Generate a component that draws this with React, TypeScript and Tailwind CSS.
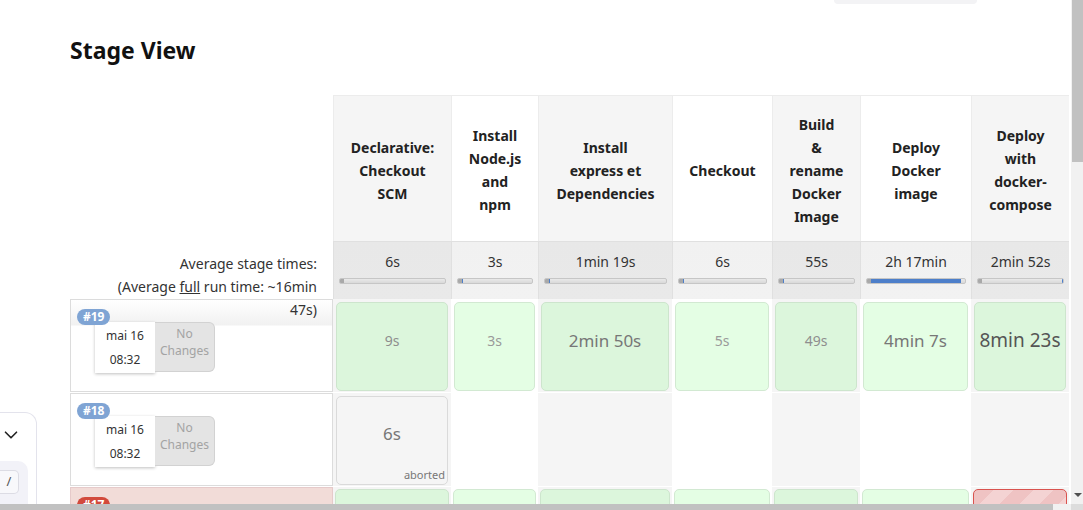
import { ChevronDown } from "lucide-react";

const GRID = "grid grid-cols-[263px_118px_87px_134px_100px_88px_111px_98px]";

type Stage = {
  lines: string[];
  avg: string;
  fill: number;
  tickRight?: boolean;
};

const stages: Stage[] = [
  { lines: ["Declarative:", "Checkout", "SCM"], avg: "6s", fill: 0 },
  { lines: ["Install", "Node.js", "and", "npm"], avg: "3s", fill: 1 },
  { lines: ["Install", "express et", "Dependencies"], avg: "1min 19s", fill: 1 },
  { lines: ["Checkout"], avg: "6s", fill: 1 },
  { lines: ["Build", "&", "rename", "Docker", "Image"], avg: "55s", fill: 1 },
  { lines: ["Deploy", "Docker", "image"], avg: "2h 17min", fill: 92 },
  { lines: ["Deploy", "with", "docker-", "compose"], avg: "2min 52s", fill: 0, tickRight: true },
];

const row19 = [
  { t: "9s", cls: "text-[14px] text-[#8e8e8e]" },
  { t: "3s", cls: "text-[14px] text-[#9a9a9a]" },
  { t: "2min 50s", cls: "text-[17px] text-[#777777]" },
  { t: "5s", cls: "text-[14px] text-[#9a9a9a]" },
  { t: "49s", cls: "text-[14px] text-[#8e8e8e]" },
  { t: "4min 7s", cls: "text-[17px] text-[#777777]" },
  { t: "8min 23s", cls: "text-[19px] text-[#555555]" },
];

const colBg = (i: number) => (i % 2 === 0 ? "bg-[#f5f5f5]" : "bg-white");
const greenBg = (i: number) =>
  i % 2 === 0 ? "bg-[#dcf6dc] border-[#cde5cd]" : "bg-[#e4fee4] border-[#d2e9d2]";

function BuildInfo({ num, red }: { num: string; red?: boolean }) {
  return (
    <div className="flex flex-col pt-[9px]">
      <span
        className={`relative z-10 self-start ml-[6px] h-[16px] px-[6px] rounded-full text-white text-[12px] font-bold leading-[16px] ${
          red ? "bg-[#d24a3c]" : "bg-[#7fa4d4]"
        }`}
      >
        {num}
      </span>
      <div className="flex ml-[24px] -mt-[3px]">
        <div className="w-[60px] h-[51px] bg-white shadow-[0_1px_3px_rgba(0,0,0,0.25)] flex flex-col items-center pt-[2px] text-[12px] leading-[24px] text-[#333]">
          <span>mai 16</span>
          <span>08:32</span>
        </div>
        <div className="w-[60px] h-[50px] bg-[#e4e4e4] border border-l-0 border-[#d2d2d2] rounded-r-[6px] flex flex-col items-center pt-[2px] text-[12px] leading-[17px] text-[#a3a3a3]">
          <span>No</span>
          <span>Changes</span>
        </div>
      </div>
    </div>
  );
}

export default function App() {
  return (
    <div className="w-[1083px] h-[510px] overflow-hidden bg-white flex flex-col text-[#333] font-['Noto_Sans',sans-serif]">
      <div className="flex h-[504px] shrink-0">
        <div className="w-[1071px] flex overflow-hidden">
          {/* side panel peeking in */}
          <aside className="w-[70px] shrink-0 flex flex-col pt-[412px]">
            <div className="w-[37px] h-[120px] border border-l-0 border-[#e3e3ec] rounded-tr-[12px] flex flex-col pt-[11px]">
              <ChevronDown size={22} strokeWidth={1.8} className="text-[#222]" />
              <div className="mt-[15px] mr-[8px] h-[60px] bg-[#f2f2f8] rounded-tr-[10px] pt-[9px]">
                <div className="w-[19px] h-[24px] bg-[#f8f8fb] border border-l-0 border-[#dcdce4] rounded-r-[5px] flex items-center justify-center text-[13px] text-[#555]">
                  /
                </div>
              </div>
            </div>
          </aside>

          <div className="w-[1001px] shrink-0 flex flex-col">
            <div className="ml-[764px] w-[143px] h-[4px] bg-[#f3f3f5] rounded-b-[4px] shrink-0" />
            <h2 className="mt-[30px] text-[23px] leading-[32px] font-bold text-[#111] shrink-0">Stage View</h2>

            <div className="mt-[29px] flex flex-col shrink-0">
              {/* header */}
              <div className={`${GRID} h-[146px]`}>
                <div />
                {stages.map((s, i) => (
                  <div
                    key={i}
                    className={`${colBg(i)} border-l border-t border-[#ececec] flex flex-col items-center justify-center pt-[3px] text-center text-[14px] font-bold leading-[23px] text-[#222]`}
                  >
                    {s.lines.map((l, j) => (
                      <span key={j}>{l}</span>
                    ))}
                  </div>
                ))}
              </div>

              {/* average row */}
              <div className={`${GRID} h-[57px]`}>
                <div className="relative z-10 text-right pr-[16px] pt-[11px] text-[14px] leading-[23px] text-[#333]">
                  Average stage times:
                  <br />
                  (Average <span className="underline">full</span> run time: ~16min
                  <br />
                  47s)
                </div>
                {stages.map((s, i) => (
                  <div
                    key={i}
                    className={`${
                      i % 2 === 0
                        ? "bg-[linear-gradient(#e8e8e8,#e9e9e9_75%,#f3f3f3)]"
                        : "bg-[linear-gradient(#f1f1f1,#f2f2f2_75%,#f8f8f8)]"
                    } border-l border-t border-[#e0e0e0] flex flex-col items-stretch pt-[10px]`}
                  >
                    <span className="text-center text-[14px] leading-[20px] text-[#333]">{s.avg}</span>
                    <div className="mt-[6px] mx-[5px] h-[6px] rounded-[2px] border border-[#c6c6c6] bg-[linear-gradient(#e9e9e9,#d9d9d9)] flex overflow-hidden">
                      <div className="w-[4px] bg-[#a9a9a9]" />
                      {s.fill > 0 && (
                        <div
                          className="bg-[#4d7fca] min-w-[1px]"
                          style={{ width: s.fill > 1 ? `${s.fill}%` : "1px" }}
                        />
                      )}
                      <div className="flex-1" />
                      {s.tickRight && <div className="w-[1px] bg-[#4d7fca]" />}
                    </div>
                  </div>
                ))}
              </div>

              {/* build #19 */}
              <div className={`${GRID} h-[93px] mt-px`}>
                <div className="border border-[#dcdcdc] bg-[linear-gradient(#ffffff,#f1f1f1_25px,#ffffff_26px,#ffffff)]">
                  <BuildInfo num="#19" />
                </div>
                {row19.map((c, i) => (
                  <div key={i} className={`${colBg(i)} p-[3px] pb-px`}>
                    <div
                      className={`h-full rounded-[5px] border ${greenBg(i)} flex items-center justify-center pb-[12px] ${c.cls}`}
                    >
                      {c.t}
                    </div>
                  </div>
                ))}
              </div>

              {/* build #18 */}
              <div className={`${GRID} h-[93px] mt-px`}>
                <div className="border border-[#dcdcdc] bg-white">
                  <BuildInfo num="#18" />
                </div>
                <div className={`${colBg(0)} p-[3px] pb-px`}>
                  <div className="relative h-full rounded-[5px] border border-[#dadada] bg-[#f5f5f5] flex items-center justify-center pb-[14px] text-[17px] text-[#777]">
                    6s
                    <span className="absolute right-[2px] bottom-[2px] text-[11px] leading-[14px] text-[#777]">
                      aborted
                    </span>
                  </div>
                </div>
                {[1, 2, 3, 4, 5, 6].map((i) => (
                  <div key={i} className={`${colBg(i)}`} />
                ))}
              </div>

              {/* build #17 */}
              <div className={`${GRID} h-[93px] mt-px`}>
                <div className="border border-[#e6caca] bg-[#f2dcd8]">
                  <BuildInfo num="#17" red />
                </div>
                {[0, 1, 2, 3, 4, 5].map((i) => (
                  <div key={i} className={`${colBg(i)} p-[2px] pb-px`}>
                    <div className={`h-full rounded-[5px] border ${greenBg(i)}`} />
                  </div>
                ))}
                <div className={`${colBg(6)} p-[2px] pb-px`}>
                  <div className="h-full rounded-[5px] border border-[#d9534f] bg-[repeating-linear-gradient(135deg,#efc3c3_0,#efc3c3_14px,#f4d3d3_14px,#f4d3d3_28px)]" />
                </div>
              </div>
            </div>
          </div>
        </div>

        {/* vertical scrollbar */}
        <div className="w-[12px] bg-[#f1f1f1] flex flex-col">
          <div className="h-[162px] bg-[#c1c1c1] ml-px" />
          <div className="flex-1" />
          <div className="self-center w-0 h-0 border-x-[4px] border-x-transparent border-t-[4px] border-t-[#505050] mb-[7px] ml-[1px]" />
        </div>
      </div>

      {/* horizontal scrollbar */}
      <div className="h-[6px] flex bg-[#f1f1f1] shrink-0">
        <div className="w-[1053px] bg-[#c1c1c1]" />
        <div className="flex-1" />
        <div className="w-[12px] bg-[#dcdcdc]" />
      </div>
    </div>
  );
}
